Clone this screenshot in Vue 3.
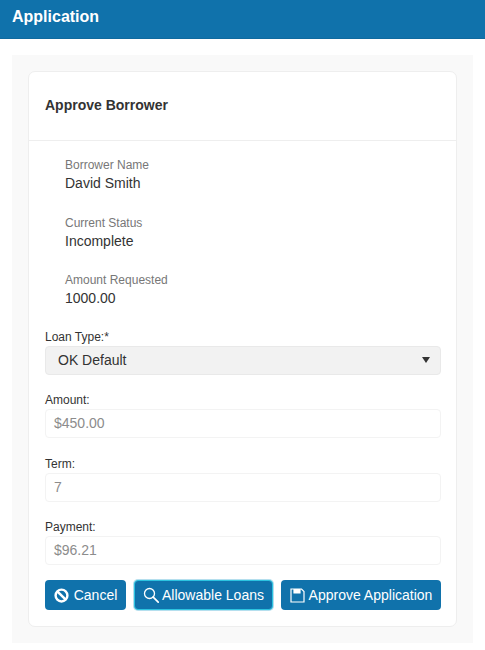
<script setup>
const infos = [
  { label: 'Borrower Name', value: 'David Smith' },
  { label: 'Current Status', value: 'Incomplete' },
  { label: 'Amount Requested', value: '1000.00' }
]
const fields = [
  { label: 'Amount:', value: '$450.00' },
  { label: 'Term:', value: '7' },
  { label: 'Payment:', value: '$96.21' }
]
</script>

<template>
  <div class="page">
    <header class="bar">Application</header>
    <main class="well">
      <section class="card">
        <h2 class="title">Approve Borrower</h2>
        <div class="body">
          <div class="infos">
            <div v-for="i in infos" :key="i.label" class="info">
              <div class="info-label">{{ i.label }}</div>
              <div class="info-value">{{ i.value }}</div>
            </div>
          </div>
          <div class="field first">
            <label class="lbl">Loan Type:*</label>
            <div class="select">
              <span>OK Default</span>
              <svg width="8" height="6" viewBox="0 0 8 6"><path d="M0 0h8L4 6z" fill="#333"/></svg>
            </div>
          </div>
          <div v-for="f in fields" :key="f.label" class="field">
            <label class="lbl">{{ f.label }}</label>
            <div class="input">{{ f.value }}</div>
          </div>
          <div class="actions">
            <button class="btn btn-cancel">
              <svg width="15" height="15" viewBox="0 0 16 16" fill="none" stroke="#fff" stroke-width="2.600">
                <circle cx="8" cy="8" r="6.300"/><path d="M3.500 3.500l9 9"/>
              </svg>
              Cancel
            </button>
            <button class="btn btn-focus">
              <svg width="16" height="16" viewBox="0 0 16 16" fill="none" stroke="#fff" stroke-width="1.300" stroke-linecap="round">
                <circle cx="6.500" cy="6.500" r="5"/><path d="M10.200 10.200l5 5" stroke-width="1.700"/>
              </svg>
              Allowable Loans
            </button>
            <button class="btn btn-approve">
              <svg width="15" height="15" viewBox="0 0 15 15" fill="none" stroke="#fff" stroke-width="1.200">
                <path d="M1 1h10.500L14 3.500V14H1z"/>
                <path d="M4 1v4h6V1" fill="#fff"/>
              </svg>
              Approve Application
            </button>
          </div>
        </div>
      </section>
    </main>
  </div>
</template>

<style>
html, body { margin: 0; background: #fff; }
</style>

<style scoped>
.page {
  width: 485px;
  height: 650px;
  overflow: hidden;
  font-family: "Liberation Sans", Arial, sans-serif;
  color: #333;
  background: #fff;
}
.bar {
  height: 39px;
  box-sizing: border-box;
  background: #1072ab;
  border-bottom: 1px solid #0f6a9f;
  color: #fff;
  font-size: 16px;
  font-weight: 700;
  line-height: 33px;
  padding-left: 12px;
}
.well {
  margin: 16px 12px 0;
  height: 588px;
  box-sizing: border-box;
  padding: 16px;
  background: #f9f9f9;
}
.card {
  height: 556px;
  box-sizing: border-box;
  background: #fff;
  border: 1px solid #eeeeee;
  border-radius: 7px;
}
.title {
  margin: 0;
  height: 69px;
  box-sizing: border-box;
  border-bottom: 1px solid #eeeeee;
  padding-left: 16px;
  font-size: 14px;
  font-weight: 700;
  line-height: 67px;
  color: #333;
}
.body { padding: 17px 15px 0 16px; }
.infos { padding-left: 20px; margin-bottom: -1px; }
.info { height: 57.500px; }
.info-label { font-size: 12px; line-height: 15px; color: #777; }
.info-value { font-size: 14px; line-height: 20px; color: #333; }
.field { margin-top: 18.500px; }
.field.first { margin-top: 0; }
.lbl { display: block; font-size: 12px; line-height: 15px; margin-bottom: 1px; color: #333; }
.select, .input {
  height: 29px;
  box-sizing: border-box;
  border-radius: 4px;
  font-size: 14px;
  line-height: 27px;
}
.select {
  display: flex;
  align-items: center;
  justify-content: space-between;
  padding: 0 10px 0 12px;
  background: #f2f2f2;
  border: 1px solid #e9e9e9;
  color: #333;
}
.input {
  padding-left: 8px;
  background: #fff;
  border: 1px solid #f3f3f3;
  color: #8c8c8c;
}
.actions {
  display: flex;
  justify-content: space-between;
  margin-top: 15px;
}
.btn {
  display: inline-flex;
  align-items: center;
  justify-content: center;
  gap: 3px;
  height: 30px;
  padding: 0;
  border: 0;
  border-radius: 4px;
  background: #1072ab;
  color: #fff;
  font-family: inherit;
  font-size: 14px;
}
.btn-cancel { width: 81px; gap: 5px; }
.btn-focus {
  width: 139px;
  border: 1px solid #2cc3e0;
  box-shadow: 0 0 0 1px #b5dfee;
  gap: 3px;
}
.btn-approve { width: 160px; gap: 4px; }
</style>
